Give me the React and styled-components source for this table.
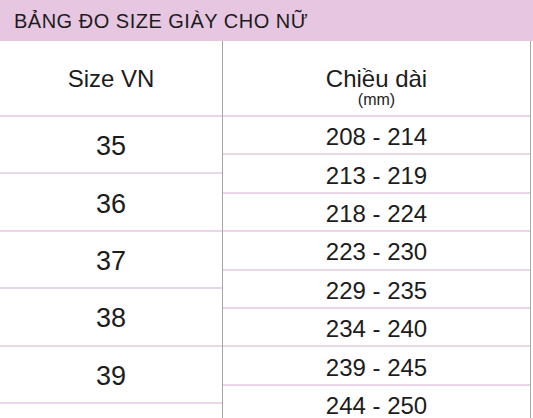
import React from 'react';
import styled, { createGlobalStyle } from 'styled-components';

const GlobalStyle = createGlobalStyle`
  body {
    margin: 0;
    background: #fff;
    font-family: "Liberation Sans", Arial, sans-serif;
    color: #1c1c1c;
  }
`;

const Page = styled.div`
  width: 533px;
  height: 418px;
  overflow: hidden;
  background: #fff;
`;

const TitleBar = styled.div`
  height: 41px;
  display: flex;
  align-items: center;
  padding: 2px 0 0 14px;
  box-sizing: border-box;
  background: #e6c6e1;
  font-size: 20px;
  letter-spacing: 0.5px;
  color: #1c1c1c;
`;

const Table = styled.div`
  width: 531px;
  height: 377px;
  display: grid;
  grid-template-columns: 223px 1fr;
  border-right: 1px solid #a9a9a9;
  box-sizing: border-box;
`;

const Column = styled.div`
  display: flex;
  flex-direction: column;
  border-right: ${({ divider }) => (divider ? '1px solid #a4a4a4' : 'none')};
`;

const HeadCell = styled.div`
  height: 76px;
  flex-shrink: 0;
  box-sizing: border-box;
  border-bottom: 2px solid #e9d6e8;
  display: flex;
  flex-direction: column;
  align-items: center;
  padding-top: 26px;
  font-size: 24px;
  line-height: 24px;
`;

const Unit = styled.span`
  font-size: 16px;
  line-height: 16px;
  margin-top: 1px;
`;

const Cell = styled.div`
  height: ${({ tall }) => (tall ? '57.4px' : '38.4px')};
  flex-shrink: 0;
  box-sizing: border-box;
  border-bottom: 2px solid #e9d6e8;
  display: flex;
  align-items: center;
  justify-content: center;
  padding-top: 4px;
  font-size: ${({ tall }) => (tall ? '27px' : '24px')};
`;

const sizes = ['35', '36', '37', '38', '39'];
const lengths = [
  '208 - 214',
  '213 - 219',
  '218 - 224',
  '223 - 230',
  '229 - 235',
  '234 - 240',
  '239 - 245',
  '244 - 250',
];

export default function App() {
  return (
    <Page>
      <GlobalStyle />
      <TitleBar>BẢNG ĐO SIZE GIÀY CHO NỮ</TitleBar>
      <Table>
        <Column divider>
          <HeadCell>Size VN</HeadCell>
          {sizes.map((s) => (
            <Cell tall key={s}>{s}</Cell>
          ))}
        </Column>
        <Column>
          <HeadCell>
            <span>Chiều dài</span>
            <Unit>(mm)</Unit>
          </HeadCell>
          {lengths.map((l) => (
            <Cell key={l}>{l}</Cell>
          ))}
        </Column>
      </Table>
    </Page>
  );
}
